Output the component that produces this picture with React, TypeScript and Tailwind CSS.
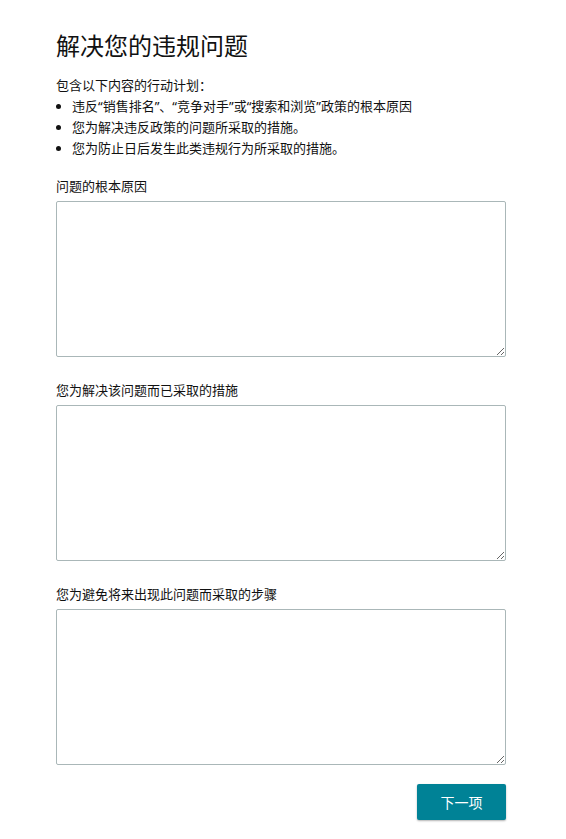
export default function App() {
  const font = { fontFamily: '"Noto Sans", "Noto Sans CJK SC", sans-serif' };
  const fields = ["问题的根本原因", "您为解决该问题而已采取的措施", "您为避免将来出现此问题而采取的步骤"];
  return (
    <div className="min-h-[839px] bg-white text-[#111]" style={font}>
      <div className="w-[450px] ml-[56px] pt-[29px]">
        <h1 className="text-[24px] leading-[34px] font-normal text-[#111]">解决您的违规问题</h1>
        <div className="mt-[12px] text-[13px] leading-[21px]">
          <p>包含以下内容的行动计划：</p>
          <ul className="list-disc pl-[16px]">
            <li>违反“销售排名”、“竞争对手”或“搜索和浏览”政策的根本原因</li>
            <li>您为解决违反政策的问题所采取的措施。</li>
            <li>您为防止日后发生此类违规行为所采取的措施。</li>
          </ul>
        </div>
        <div className="mt-[17px] flex flex-col gap-[23px]">
          {fields.map((f) => (
            <label key={f} className="flex flex-col">
              <span className="text-[13px] leading-[21px] mb-[4px]">{f}</span>
              <textarea className="w-[450px] h-[156px] border border-[#aab7b8] rounded-[2px] outline-none p-2 text-[13px]" />
            </label>
          ))}
        </div>
        <div className="mt-[19px] flex justify-end">
          <button className="w-[89px] h-[36px] bg-[#008296] text-white text-[14px] rounded-[2px] shadow-[0_1px_2px_rgba(0,0,0,0.3)]">
            下一项
          </button>
        </div>
      </div>
    </div>
  );
}
